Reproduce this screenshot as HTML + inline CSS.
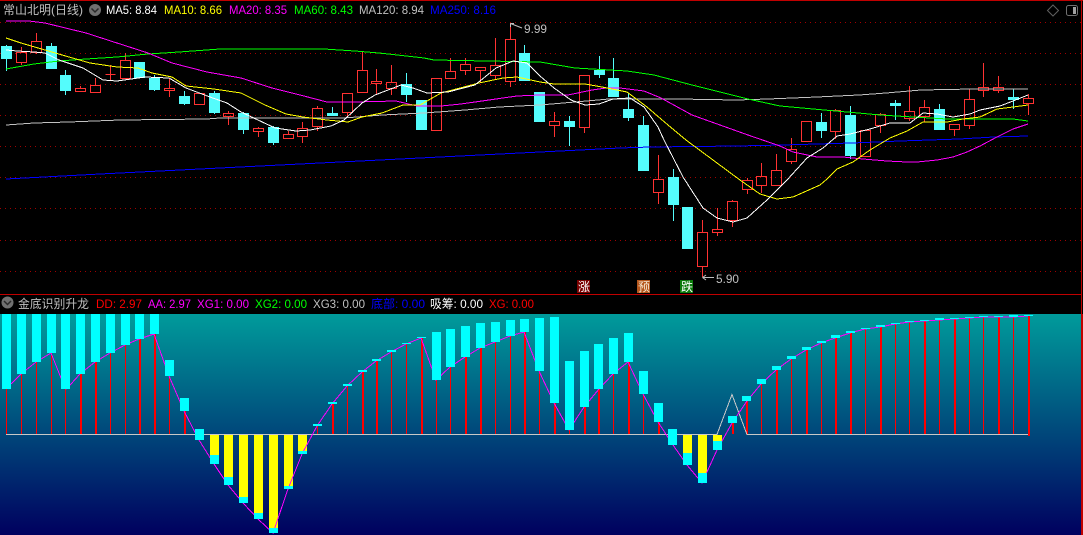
<!DOCTYPE html>
<html lang="zh-CN">
<head>
<meta charset="utf-8">
<title>常山北明</title>
<style>
html,body{margin:0;padding:0;background:#000;width:1083px;height:535px;overflow:hidden}
svg{display:block}
text{font-family:"Liberation Sans","WenQuanYi Zen Hei","Noto Sans CJK SC",sans-serif;font-size:12px}
.a{shape-rendering:crispEdges}
</style>
</head>
<body>
<svg width="1083" height="535" viewBox="0 0 1083 535" xmlns="http://www.w3.org/2000/svg">
<defs>
<linearGradient id="g" x1="0" y1="0" x2="0" y2="1">
<stop offset="0" stop-color="#009b9b"/>
<stop offset="1" stop-color="#00005f"/>
</linearGradient>
</defs>
<rect width="1083" height="535" fill="#000"/>
<rect x="0" y="314" width="1081" height="221" fill="url(#g)"/>

<!-- borders -->
<g class="a">
<rect x="0" y="0" width="1083" height="1" fill="#c00000"/>
<rect x="1081" y="0" width="1" height="314" fill="#c00000"/>
<rect x="1081" y="314" width="2" height="221" fill="#c00000"/>
<rect x="0" y="294" width="1082" height="1" fill="#c00000"/>
</g>

<!-- grid -->
<path class="a" d="M0 22.5H1081M0 53.5H1081M0 84.5H1081M0 115.5H1081M0 146.5H1081M0 177.5H1081M0 208.5H1081M0 240.5H1081M0 271.5H1081" stroke="#a00000" stroke-width="1" stroke-dasharray="1 4" fill="none"/>

<!-- red candles -->
<path class="a" fill="none" stroke="#ff3232" stroke-width="1" d="M16.5 52.5h10v10h-10zM31.5 41.5h10v11h-10zM75.5 88.5h10v3h-10zM90.5 85.5h10v7h-10zM105.5 74.5h10M120.5 60.5h10v18h-10zM164.5 88.5h10v2h-10zM194.5 93.5h10v11h-10zM223.5 113.5h10v3h-10zM253.5 128.5h10v3h-10zM283.5 134.5h10v4h-10zM297.5 128.5h10v8h-10zM312.5 108.5h10v18h-10zM342.5 93.5h10v19h-10zM357.5 70.5h10v22h-10zM371.5 81.5h10v2h-10zM386.5 82.5h10v6h-10zM431.5 78.5h10v52h-10zM445.5 71.5h10v7h-10zM460.5 64.5h10v6h-10zM475.5 67.5h10v3h-10zM490.5 65.5h10v10h-10zM505.5 39.5h10v42h-10zM549.5 121.5h10v4h-10zM579.5 75.5h10v52h-10zM653.5 179.5h10v13h-10zM697.5 232.5h10v34h-10zM712.5 229.5h10v3h-10zM727.5 201.5h10v19h-10zM742.5 180.5h10v9h-10zM756.5 176.5h10v9h-10zM771.5 170.5h10v15h-10zM786.5 149.5h10v12h-10zM801.5 121.5h10v20h-10zM830.5 110.5h10v21h-10zM860.5 130.5h10v26h-10zM875.5 114.5h10v11h-10zM904.5 111.5h10v7h-10zM919.5 107.5h10v9h-10zM949.5 124.5h10v5h-10zM964.5 99.5h10v26h-10zM978.5 87.5h10v3h-10zM993.5 87.5h10v3h-10zM1023.5 98.5h10v5h-10z
M21.5 47V52M21.5 63V65M36.5 33V41M36.5 53V54M80.5 86V88M95.5 78V85M110.5 65V80M125.5 53V60M169.5 78V88M169.5 91V97M228.5 111V113M228.5 117V125M258.5 127V128M258.5 132V137M288.5 131V134M302.5 122V128M302.5 137V143M317.5 106V108M317.5 127V131M347.5 113V117M362.5 52V70M376.5 69V81M376.5 84V95M391.5 65V82M391.5 89V95M450.5 58V71M465.5 58V64M465.5 71V75M480.5 71V83M495.5 38V65M495.5 76V80M510.5 23V39M510.5 82V87M554.5 112V121M554.5 126V137M584.5 128V133M658.5 155V179M658.5 193V204M702.5 220V232M702.5 267V277M717.5 208V229M717.5 233V236M732.5 200V201M732.5 221V227M747.5 178V180M747.5 190V194M761.5 163V176M761.5 186V193M776.5 154V170M791.5 138V149M791.5 162V164M835.5 109V110M835.5 132V139M880.5 113V114M880.5 126V133M909.5 86V111M909.5 119V121M924.5 100V107M924.5 117V122M954.5 130V136M969.5 89V99M969.5 126V129M983.5 63V87M983.5 91V97M998.5 76V87M998.5 91V93M1028.5 94V98M1028.5 104V115"/>

<!-- cyan candles -->
<path class="a" fill="#54fcfc" d="M1 46h11v13h-11zM46 46h11v23h-11zM60 75h11v16h-11zM134 62h11v16h-11zM149 78h11v12h-11zM179 96h11v8h-11zM209 93h11v20h-11zM238 113h11v17h-11zM268 127h11v16h-11zM327 113h11v3h-11zM401 84h11v11h-11zM416 100h11v30h-11zM519 53h11v28h-11zM534 92h11v30h-11zM564 121h11v6h-11zM594 70h11v5h-11zM608 78h11v19h-11zM623 109h11v9h-11zM638 125h11v46h-11zM668 177h11v28h-11zM682 207h11v42h-11zM816 122h11v9h-11zM845 115h11v41h-11zM890 103h11v3h-11zM934 109h11v21h-11zM1008 97h11v3h-11z"/>
<path class="a" fill="none" stroke="#54fcfc" stroke-width="1" d="M6.5 45V71M51.5 43V46M65.5 70V95M154.5 75V91M184.5 91V105M214.5 91V114M243.5 112V134M273.5 126V145M332.5 107V116M406.5 73V102M524.5 45V53M569.5 116V146M599.5 56V78M613.5 58V78M628.5 93V121M643.5 116V125M673.5 169V221M821.5 113V138M850.5 106V159M895.5 100V120M939.5 104V109M1013.5 89V109"/>

<!-- moving averages -->
<g fill="none" stroke-width="1" class="a">
<polyline stroke="#0000ff" points="6,179 100,174 200,169 300,164 400,159 500,154 540,152 580,150 620,148 651,147 737,146 782,145 852,143 900,141 959,139 994,137 1028,136"/>
<polyline stroke="#c0c0c0" points="6,125 34,123 69,122 120,120 207,119 220,118 344,118 382,115 424,113 465,110 499,107 540,105 575,102 609,99 678,99 737,100 768,99 817,97 859,95 886,93 921,90 973,89 1028,89"/>
<polyline stroke="#00ff00" points="6,69 34,64 59,61 86,59 117,57 148,54 179,52 220,49 324,49 355,51 379,53 424,58 434,60 540,62 575,68 627,71 654,75 692,85 748,99 780,106 813,109 847,112 880,115 913,117 947,119 1013,119 1028,121"/>
<polyline stroke="#ff00ff" points="6,21 29,21 45,23 86,33 117,43 148,53 172,63 207,72 241,78 272,88 300,95 327,102 355,102 396,101 417,106 441,106 461,104 489,100 517,96 540,95 568,95 592,90 606,88 620,88 644,91 661,98 692,115 720,125 748,135 780,146 793,152 817,157 843,157 863,159 887,161 907,162 917,162 937,160 953,157 967,152 980,146 997,137 1013,129 1028,124"/>
<polyline stroke="#ffff00" points="6,38 21,43 45,50 69,57 90,63 117,67 138,68 152,73 172,77 186,86 214,89 241,93 265,105 286,114 303,117 327,120 348,122 362,117 382,113 403,105 420,105 441,93 479,83 503,78 517,77 540,82 554,84 585,84 602,87 627,92 647,107 668,125 686,140 713,160 740,180 760,194 777,199 793,197 820,185 827,179 837,169 853,162 870,150 890,138 907,131 923,122 947,122 963,119 980,117 997,109 1013,107 1028,105"/>
<polyline stroke="#ffffff" points="6,50 17,51 34,52 45,53 59,60 83,68 103,80 117,81 131,79 145,77 169,78 186,88 210,97 227,103 241,112 258,120 275,128 296,131 310,130 331,126 344,120 362,103 375,95 401,85 413,88 427,93 448,92 475,85 496,68 513,61 527,63 540,76 554,88 571,100 585,105 599,104 613,99 630,98 644,107 658,127 664,140 683,177 703,208 717,218 733,222 747,218 767,200 787,180 807,158 823,148 837,136 850,134 870,129 890,123 910,123 923,113 937,114 953,117 970,114 980,110 1000,106 1013,101 1028,95"/>
</g>

<!-- price annotations -->
<g fill="none" stroke="#c0c0c0" stroke-width="1">
<path d="M522 28L510.5 23.5M510.5 23.5H514M510.5 23.5V27"/>
<path d="M714 277.5H702.5M702.5 277.5L706 275M702.5 277.5L706 280"/>
</g>
<text x="524" y="33" fill="#c0c0c0" textLength="23" lengthAdjust="spacingAndGlyphs">9.99</text>
<text x="716" y="283" fill="#c0c0c0" textLength="23" lengthAdjust="spacingAndGlyphs">5.90</text>

<!-- markers -->
<g class="a">
<rect x="577" y="280" width="13" height="13" fill="#7a0000"/>
<rect x="637" y="280" width="13" height="13" fill="#b5561c"/>
<rect x="680" y="280" width="13" height="13" fill="#0b7a0b"/>
</g>
<text x="578" y="291" fill="#fff" textLength="12">涨</text>
<text x="638" y="291" fill="#f5e6d0" textLength="12">预</text>
<text x="681" y="291" fill="#fff" textLength="12">跌</text>

<!-- top header -->
<text x="3" y="14" fill="#c0c0c0" textLength="80" lengthAdjust="spacingAndGlyphs">常山北明(日线)</text>
<circle cx="95" cy="10" r="6" fill="#707070"/>
<path d="M91.5 8.5L95 12L98.5 8.5" fill="none" stroke="#2a2a2a" stroke-width="1.5"/>
<text x="106" y="14" fill="#ffffff" textLength="51" lengthAdjust="spacingAndGlyphs">MA5: 8.84</text>
<text x="164" y="14" fill="#ffff00" textLength="58" lengthAdjust="spacingAndGlyphs">MA10: 8.66</text>
<text x="229" y="14" fill="#ff00ff" textLength="58" lengthAdjust="spacingAndGlyphs">MA20: 8.35</text>
<text x="294" y="14" fill="#00ff00" textLength="59" lengthAdjust="spacingAndGlyphs">MA60: 8.43</text>
<text x="359" y="14" fill="#c0c0c0" textLength="65" lengthAdjust="spacingAndGlyphs">MA120: 8.94</text>
<text x="430" y="14" fill="#0000ff" textLength="66" lengthAdjust="spacingAndGlyphs">MA250: 8.16</text>
<path d="M1053 5L1058.5 10.5L1053 16L1047.5 10.5Z" fill="none" stroke="#606060" stroke-width="1"/>
<rect x="1066.5" y="5.5" width="11" height="10" rx="2" fill="none" stroke="#707070" stroke-width="1"/>
<rect x="1073" y="7" width="3" height="7" fill="#a0a0a0"/>

<!-- lower header -->
<circle cx="7.5" cy="302.5" r="6" fill="#707070"/>
<path d="M4 301L7.5 304.5L11 301" fill="none" stroke="#2a2a2a" stroke-width="1.5"/>
<text x="18" y="308" fill="#c0c0c0" textLength="71" lengthAdjust="spacingAndGlyphs">金底识别升龙</text>
<text x="96" y="308" fill="#ff0000" textLength="46" lengthAdjust="spacingAndGlyphs">DD: 2.97</text>
<text x="148" y="308" fill="#ff00ff" textLength="43" lengthAdjust="spacingAndGlyphs">AA: 2.97</text>
<text x="197" y="308" fill="#ff00ff" textLength="52" lengthAdjust="spacingAndGlyphs">XG1: 0.00</text>
<text x="255" y="308" fill="#00ff00" textLength="52" lengthAdjust="spacingAndGlyphs">XG2: 0.00</text>
<text x="313" y="308" fill="#c0c0c0" textLength="52" lengthAdjust="spacingAndGlyphs">XG3: 0.00</text>
<text x="371" y="308" fill="#0000ff" textLength="54" lengthAdjust="spacingAndGlyphs">底部: 0.00</text>
<text x="430" y="308" fill="#ffffff" textLength="53" lengthAdjust="spacingAndGlyphs">吸筹: 0.00</text>
<text x="489" y="308" fill="#ff0000" textLength="45" lengthAdjust="spacingAndGlyphs">XG: 0.00</text>

<!-- lower panel: red lines -->
<path class="a" fill="none" stroke="#ff0000" stroke-width="1" d="M6.5 389V434M21.5 374V434M36.5 362V434M51.5 353V434M65.5 389V434M110.5 353V434M125.5 345V434M169.5 376V434M317.5 426V434M347.5 386V434M391.5 352V434M406.5 344V434M436.5 380V434M450.5 367V434M495.5 342V434M510.5 336V434M539.5 371V434M569.5 430V434M613.5 374V434M643.5 394V434M761.5 384V434M791.5 359V434M821.5 343V434M865.5 329V434M895.5 324V434M909.5 322V434M939.5 320V434M969.5 318V434M983.5 317V434M1013.5 317V434"/>
<path class="a" fill="none" stroke="#ff0000" stroke-width="2" d="M81 374V434M96 362V434M140 339V434M155 334V434M185 411V434M333 404V434M363 372V434M377 361V434M422 338V434M466 357V434M481 348V434M525 332V434M555 403V434M585 407V434M599 389V434M629 362V434M659 422V434M733 423V434M747 401V434M777 370V434M807 350V434M836 338V434M851 333V434M881 327V434M925 321V434M955 319V434M999 317V434M1029 316V436"/>

<!-- yellow bars -->
<path class="a" fill="#ffff00" d="M210 435h9v20h-9zM224 435h9v42h-9zM239 435h9v62h-9zM254 435h9v78h-9zM269 435h9v93h-9zM284 435h9v51h-9zM298 435h9v16h-9zM683 435h9v18h-9zM698 435h9v38h-9zM713 435h9v6h-9z"/>

<!-- zero line with triangle -->
<polyline fill="none" stroke="#c8c8c8" stroke-width="1" class="a" points="6,434.5 717,434.5 732,394.5 747,434.5 1028,434.5"/>

<!-- magenta line -->
<polyline fill="none" stroke="#ff00ff" stroke-width="1" class="a" points="11,384 21,374 36,362 51,353 61,378 66,389 71,384 80,374 95,362 110,353 125,345 139,339 154,334 169,376 184,411 199,440 214,464 228,485 243,503 258,519 273,533 288,489 302,454 317,426 332,404 347,386 362,372 376,361 391,352 406,344 421,338 436,380 450,367 465,357 480,348 495,342 510,336 524,332 539,371 554,403 569,430 584,407 599,389 613,374 628,362 643,394 658,422 673,445 687,465 702,483 717,450 732,423 747,401 761,384 776,370 791,359 806,350 821,343 835,338 850,333 865,329 880,327 895,324 909,322 924,321 939,320 954,319 969,318 983,317 998,317 1013,317 1028,316"/>

<!-- cyan bars -->
<path class="a" fill="#00ffff" d="M2 314h9v75h-9zM17 314h9v60h-9zM32 314h9v48h-9zM47 314h9v39h-9zM61 314h9v75h-9zM76 314h9v60h-9zM91 314h9v48h-9zM106 314h9v39h-9zM121 314h9v31h-9zM135 314h9v25h-9zM150 314h9v20h-9zM165 360h9v16h-9zM180 398h9v13h-9zM195 429h9v11h-9zM210 455h9v9h-9zM224 477h9v8h-9zM239 497h9v6h-9zM254 513h9v6h-9zM269 528h9v5h-9zM284 486h9v3h-9zM298 451h9v3h-9zM313 424h9v2h-9zM328 402h9v2h-9zM343 384h9v2h-9zM358 370h9v2h-9zM372 359h9v2h-9zM387 350h9v2h-9zM402 343h9v1h-9zM417 337h9v1h-9zM432 332h9v48h-9zM446 329h9v38h-9zM461 326h9v31h-9zM476 323h9v25h-9zM491 322h9v20h-9zM506 320h9v16h-9zM520 319h9v13h-9zM535 318h9v53h-9zM550 317h9v86h-9zM565 361h9v69h-9zM580 351h9v56h-9zM594 344h9v45h-9zM609 338h9v36h-9zM624 333h9v29h-9zM639 371h9v23h-9zM654 403h9v19h-9zM668 429h9v16h-9zM683 453h9v12h-9zM698 473h9v10h-9zM713 441h9v9h-9zM728 416h9v7h-9zM742 396h9v5h-9zM757 379h9v5h-9zM772 366h9v4h-9zM787 356h9v3h-9zM802 347h9v3h-9zM817 341h9v2h-9zM831 335h9v3h-9zM846 331h9v2h-9zM861 328h9v1h-9zM876 325h9v2h-9zM891 323h9v1h-9zM905 321h9v1h-9zM920 320h9v1h-9zM935 318h9v2h-9zM950 318h9v1h-9zM965 317h9v1h-9zM979 316h9v1h-9zM994 316h9v1h-9zM1009 315h9v2h-9zM1024 315h9v1h-9z"/>
</svg>
</body>
</html>
